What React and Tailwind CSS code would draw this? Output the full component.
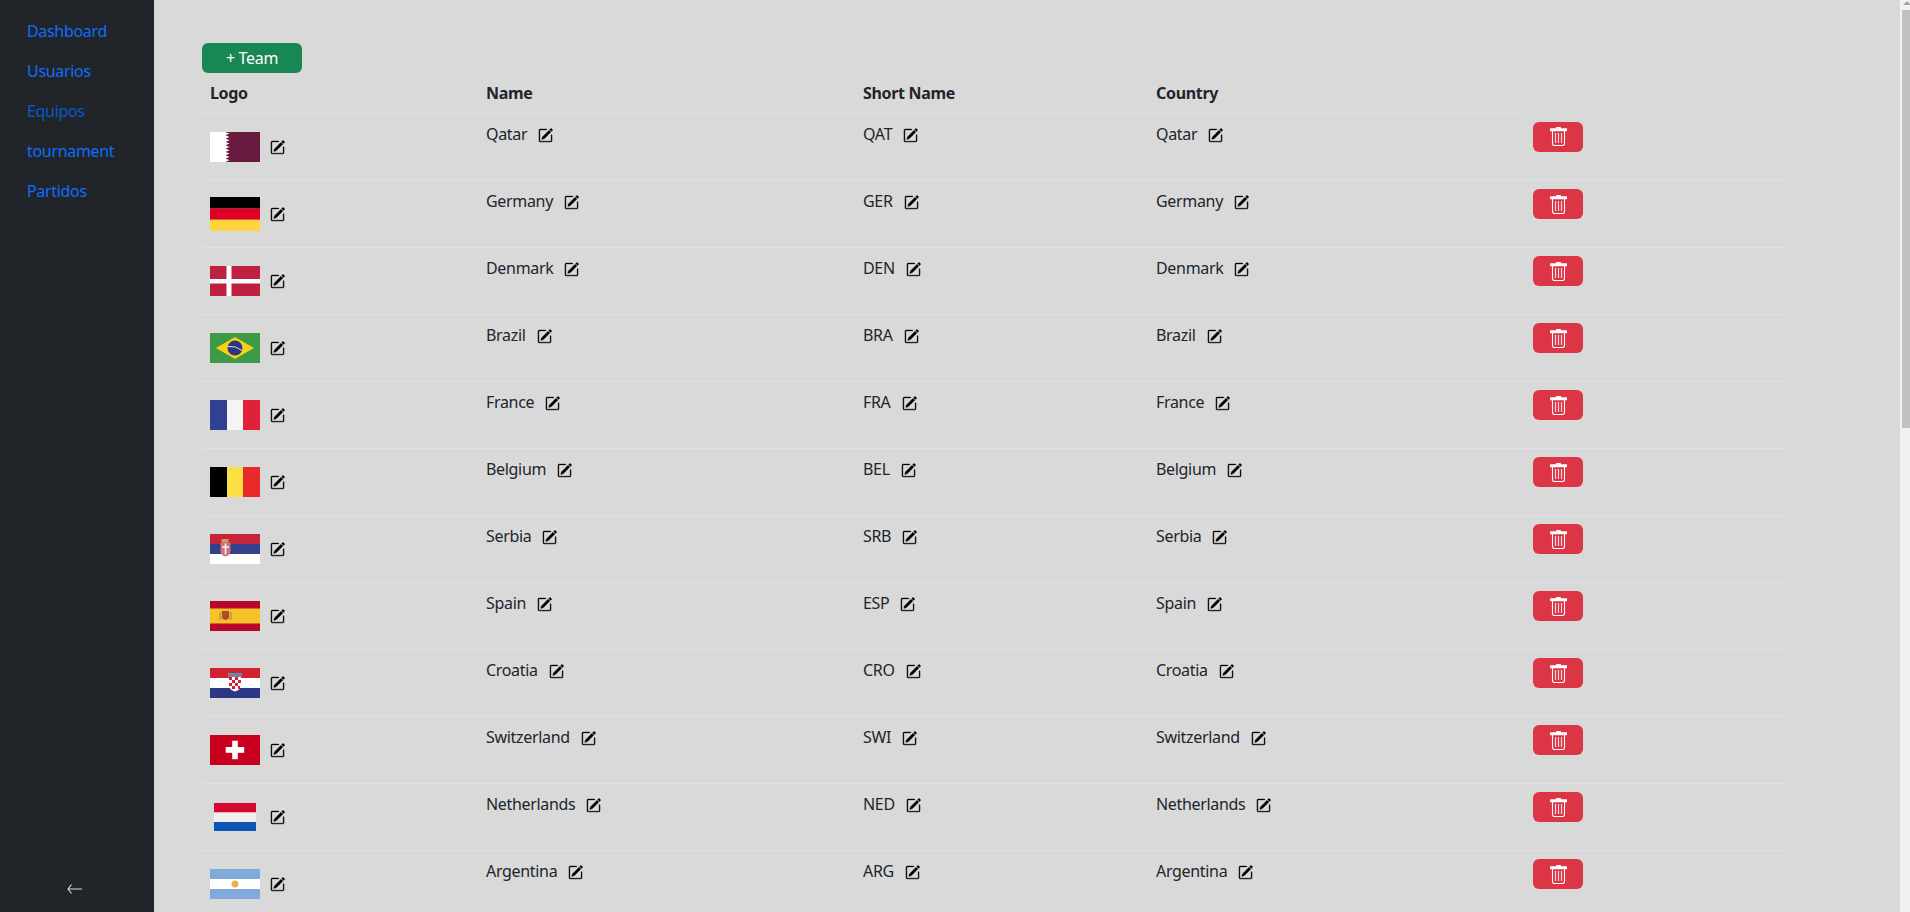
import { BsPencilSquare } from 'react-icons/bs'

const navLinks = ['Dashboard', 'Usuarios', 'Equipos', 'tournament', 'Partidos']

function Stripes({ colors, height = 30 }) {
  const h = height / colors.length
  return colors.map((c, i) => <rect key={i} x="0" y={i * h} width="50" height={h + 0.2} fill={c} />)
}

function Flag({ code }) {
  if (code === 'NED') {
    return (
      <svg width="42" height="28" viewBox="0 0 42 28">
        <rect width="42" height="9.500" fill="#d50a30" />
        <rect y="9.500" width="42" height="9.500" fill="#f0f0f0" />
        <rect y="19" width="42" height="9" fill="#0d55b2" />
      </svg>
    )
  }
  if (code === 'GER') {
    return (
      <svg width="50" height="34" viewBox="0 0 50 34">
        <Stripes colors={['#000000', '#dd0027', '#ffd53f']} height={34} />
      </svg>
    )
  }
  return (
    <svg width="50" height="30" viewBox="0 0 50 30">
      {code === 'QAT' && (
        <>
          <rect width="50" height="30" fill="#691a3f" />
          <rect width="16" height="30" fill="#ffffff" />
          <polygon
            fill="#ffffff"
            points="15,0 19.500,1.600 15.500,3.300 19.500,5 15.500,6.600 19.500,8.300 15.500,10 19.500,11.600 15.500,13.300 19.500,15 15.500,16.600 19.500,18.300 15.500,20 19.500,21.600 15.500,23.300 19.500,25 15.500,26.600 19.500,28.300 15,30"
          />
        </>
      )}
      {code === 'DEN' && (
        <>
          <rect width="50" height="30" fill="#bf2040" />
          <rect x="16.500" width="5" height="30" fill="#ffffff" />
          <rect y="13" width="50" height="4.500" fill="#ffffff" />
        </>
      )}
      {code === 'BRA' && (
        <>
          <rect width="50" height="30" fill="#3f9a47" />
          <polygon points="25,4 44,15 25,26 6,15" fill="#f6d117" />
          <circle cx="25" cy="15" r="7.500" fill="#2d3482" />
          <path d="M18 13.500q8-1 14 4" stroke="#e4e4e4" strokeWidth="1" fill="none" />
        </>
      )}
      {code === 'FRA' && (
        <>
          <rect width="17" height="30" fill="#31408f" />
          <rect x="17" width="16" height="30" fill="#f4f4f4" />
          <rect x="33" width="17" height="30" fill="#e1213a" />
        </>
      )}
      {code === 'BEL' && (
        <>
          <rect width="17" height="30" fill="#000000" />
          <rect x="17" width="16" height="30" fill="#fae042" />
          <rect x="33" width="17" height="30" fill="#e92a2a" />
        </>
      )}
      {code === 'SRB' && (
        <>
          <Stripes colors={['#c7243a', '#33408a', '#ffffff']} />
          <rect x="11.500" y="5" width="7" height="3.500" fill="#c4a45a" />
          <path d="M10.500 8.500h10v8q0 5-5 6q-5-1-5-6z" fill="#d0737c" />
          <path d="M15.500 9.500v11M12 13h7" stroke="#f4f0f0" strokeWidth="1.600" />
        </>
      )}
      {code === 'ESP' && (
        <>
          <rect width="50" height="30" fill="#b8052a" />
          <rect y="7.500" width="50" height="15" fill="#f4c327" />
          <rect x="9" y="11" width="2.500" height="8" fill="#c9a24a" />
          <path d="M12 10h7v7q-3.500 4-7 0z" fill="#b4482a" />
          <rect x="19.500" y="11" width="2.500" height="8" fill="#c9a24a" />
        </>
      )}
      {code === 'CRO' && (
        <>
          <Stripes colors={['#d0222f', '#ffffff', '#2e3784']} />
          <rect x="18" y="5" width="14" height="4" fill="#6f86a8" />
          <path d="M19 9h12v8q0 5-6 6.500q-6-1.500-6-6.500z" fill="#ffffff" />
          <path
            d="M19 9h3v3h-3zM25 9h3v3h-3zM22 12h3v3h-3zM28 12h3v3h-3zM19 15h3v3h-3zM25 15h3v3h-3zM22 18h3v3h-3zM28 18h2v3h-2z"
            fill="#d0222f"
          />
        </>
      )}
      {code === 'SWI' && (
        <>
          <rect width="50" height="30" fill="#c8001e" />
          <rect x="22.200" y="5.700" width="5.600" height="18.500" fill="#ffffff" />
          <rect x="15.700" y="12" width="18.500" height="5.800" fill="#ffffff" />
        </>
      )}
      {code === 'ARG' && (
        <>
          <Stripes colors={['#80a9dc', '#ffffff', '#80a9dc']} />
          <circle cx="25" cy="15" r="3.500" fill="#e8b04a" />
        </>
      )}
    </svg>
  )
}

const teams = [
  ['Qatar', 'QAT'],
  ['Germany', 'GER'],
  ['Denmark', 'DEN'],
  ['Brazil', 'BRA'],
  ['France', 'FRA'],
  ['Belgium', 'BEL'],
  ['Serbia', 'SRB'],
  ['Spain', 'ESP'],
  ['Croatia', 'CRO'],
  ['Switzerland', 'SWI'],
  ['Netherlands', 'NED'],
  ['Argentina', 'ARG'],
]

function EditIcon() {
  return <BsPencilSquare className="w-[15px] h-[15px] text-black flex-shrink-0" stroke="currentColor" strokeWidth={0.35} />
}

function TrashIcon() {
  return (
    <svg width="17" height="19" viewBox="0 0 17 19" fill="none">
      <rect x="6" y="0" width="5" height="2" rx="0.800" fill="#fff" />
      <rect x="0" y="1.200" width="17" height="3" rx="0.600" fill="#fff" />
      <path d="M2.500 4v12.500q0 2 2 2h8q2 0 2-2V4" stroke="#fff" strokeWidth="1.100" />
      <path d="M5.500 6v10M8.500 6v10M11.500 6v10" stroke="#fff" strokeOpacity="0.800" strokeWidth="1.200" />
    </svg>
  )
}

function EditableText({ children }) {
  return (
    <span className="flex items-start gap-[11px]">
      <span>{children}</span>
      <span className="mt-[6px]"><EditIcon /></span>
    </span>
  )
}

export default function App() {
  return (
    <div className="flex h-screen overflow-hidden bg-[#d9d9d9] text-[#212529] text-base font-['Noto_Sans',sans-serif] tracking-[-0.02em]">
      <aside className="w-[154px] flex-shrink-0 bg-[#212529] flex flex-col justify-between pt-[11px] pb-[18px]">
        <nav className="flex flex-col">
          {navLinks.map(l => (
            <a key={l} className={`pl-[27px] py-2 leading-6 ${l === 'Equipos' ? 'text-[#0a58ca]' : 'text-[#0d6efd]'}`}>{l}</a>
          ))}
        </nav>
        <div className="pl-[67px]">
          <svg className="block" width="15" height="10" viewBox="0 0 15 10" fill="none">
            <path d="M4.500 .5L1 5l3.500 4.500M1 5h14" stroke="#dcdcdc" strokeWidth="1.100" />
          </svg>
        </div>
      </aside>

      <main className="flex-1 min-w-0 pl-[48px] pt-[43px]">
        <button className="block w-[100px] h-[30px] rounded-md bg-[#198754] text-white leading-[30px] text-center">+ Team</button>
        <table className="w-[1587px] table-fixed border-collapse">
          <colgroup>
            <col className="w-[276px]" />
            <col className="w-[377px]" />
            <col className="w-[293px]" />
            <col className="w-[377px]" />
            <col className="w-[264px]" />
          </colgroup>
          <thead>
            <tr>
              {['Logo', 'Name', 'Short Name', 'Country'].map(h => (
                <th key={h} className="p-2 text-left font-bold leading-6 border-b border-[#dee2e6]">{h}</th>
              ))}
            </tr>
          </thead>
          <tbody>
            {teams.map(([name, code]) => (
              <tr key={code} className="h-[67px] border-b border-[#dee2e6]">
                <td className="p-2 align-top">
                  <div className="flex items-center gap-[10px]">
                    <div className="w-[50px] h-[50px] flex items-center justify-center"><Flag code={code} /></div>
                    <span className="mt-[1px]"><EditIcon /></span>
                  </div>
                </td>
                <td className="p-2 align-top leading-6"><EditableText>{name}</EditableText></td>
                <td className="p-2 align-top leading-6"><EditableText>{code}</EditableText></td>
                <td className="p-2 align-top leading-6"><EditableText>{name}</EditableText></td>
                <td className="p-2 align-top">
                  <button className="w-[50px] h-[30px] rounded-md bg-[#dc3545] flex items-center justify-center">
                    <TrashIcon />
                  </button>
                </td>
              </tr>
            ))}
          </tbody>
        </table>
      </main>

      <div className="w-[10px] flex-shrink-0 bg-[#f1f1f1] flex flex-col overflow-hidden">
        <div className="h-[10px] pl-[3px] pt-[1px]">
          <div className="w-0 h-0 border-x-[4px] border-x-transparent border-b-[4px] border-b-[#a3a3a3]" />
        </div>
        <div className="ml-[2px] w-[8px] h-[418px] bg-[#c1c1c1]" />
      </div>
    </div>
  )
}
